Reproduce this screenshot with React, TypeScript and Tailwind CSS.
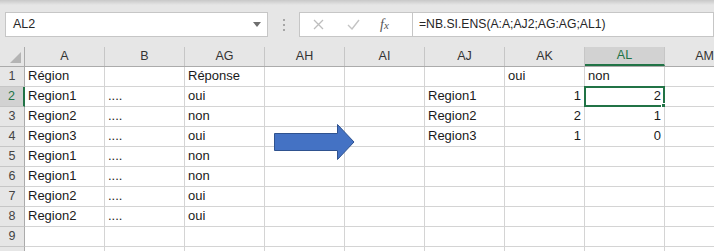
import React from "react";

type Cell = { v: string; right?: boolean };

const columns = ["A", "B", "AG", "AH", "AI", "AJ", "AK", "AL", "AM"];

const r = (v: string): Cell => ({ v, right: true });
const t = (v: string): Cell => ({ v });

// one array per row, one entry per column
const rows: Cell[][] = [
  [t("Région"), t(""), t("Réponse"), t(""), t(""), t(""), t("oui"), t("non"), t("")],
  [t("Region1"), t("...."), t("oui"), t(""), t(""), t("Region1"), r("1"), r("2"), t("")],
  [t("Region2"), t("...."), t("non"), t(""), t(""), t("Region2"), r("2"), r("1"), t("")],
  [t("Region3"), t("...."), t("oui"), t(""), t(""), t("Region3"), r("1"), r("0"), t("")],
  [t("Region1"), t("...."), t("non"), t(""), t(""), t(""), t(""), t(""), t("")],
  [t("Region1"), t("...."), t("non"), t(""), t(""), t(""), t(""), t(""), t("")],
  [t("Region2"), t("...."), t("oui"), t(""), t(""), t(""), t(""), t(""), t("")],
  [t("Region2"), t("...."), t("oui"), t(""), t(""), t(""), t(""), t(""), t("")],
  [t(""), t(""), t(""), t(""), t(""), t(""), t(""), t(""), t("")],
];

const font = "font-['Liberation_Sans',Arial,sans-serif]";

function FormulaBar() {
  return (
    <div className="flex h-[47px] flex-col bg-[#e6e6e6]">
      <div className="h-[5px] bg-gradient-to-b from-[#c8c8c8] to-[#e6e6e6]" />
      <div className="mt-[7px] flex h-[25px] items-stretch pl-[5px]">
        {/* name box */}
        <div className="flex w-[263px] items-center justify-between border border-[#c6c6c6] bg-white pl-[7px] pr-[6px]">
          <span className={`${font} text-[12.5px] text-[#262626]`}>AL2</span>
          <svg width="8" height="5" viewBox="0 0 8 5">
            <path d="M0 0 L8 0 L4 5 Z" fill="#6e6e6e" />
          </svg>
        </div>
        {/* grip */}
        <div className="flex w-[31px] flex-col items-center justify-center gap-[3px]">
          <span className="h-[2px] w-[2px] bg-[#a6a6a6]" />
          <span className="h-[2px] w-[2px] bg-[#a6a6a6]" />
          <span className="h-[2px] w-[2px] bg-[#a6a6a6]" />
        </div>
        {/* cancel / enter / fx */}
        <div className="flex w-[113px] items-center border border-r-0 border-[#c6c6c6] bg-white">
          <svg className="ml-[13px]" width="11" height="11" viewBox="0 0 11 11">
            <path d="M1 1 L10 10 M10 1 L1 10" stroke="#bdbdbd" strokeWidth="1.3" />
          </svg>
          <svg className="ml-[23px]" width="13" height="11" viewBox="0 0 13 11">
            <path d="M1 6 L5 10 L12 1" stroke="#c4c4c4" strokeWidth="1.4" fill="none" />
          </svg>
          <span className="ml-[20px] font-['Liberation_Serif',serif] text-[14px] italic text-[#555]">
            f<span className="text-[11px]">x</span>
          </span>
        </div>
        {/* formula input */}
        <div className="flex flex-1 items-center border border-[#c6c6c6] bg-white pl-[6px]">
          <span className={`${font} text-[12.2px] text-[#262626]`}>=NB.SI.ENS(A:A;AJ2;AG:AG;AL1)</span>
        </div>
      </div>
    </div>
  );
}

function Sheet() {
  return (
    <div className={`relative ${font} text-[13px] text-[#1a1a1a]`}>
      {/* column headers */}
      <div className="flex h-[20px] border-b border-[#ababab] bg-[#e6e6e6]">
        <div className="relative w-[25px] shrink-0 border-r border-[#ababab]">
          <svg className="absolute bottom-[3px] right-[3px]" width="11" height="11" viewBox="0 0 11 11">
            <path d="M11 0 L11 11 L0 11 Z" fill="#b4b4b4" />
          </svg>
        </div>
        {columns.map((c) =>
          c === "AL" ? (
            <div
              key={c}
              className="flex w-[80px] shrink-0 items-center justify-center border-r border-[#c6c6c6] border-b-2 border-b-[#217346] bg-[#d2d2d2] text-[12.5px] text-[#217346]"
            >
              {c}
            </div>
          ) : (
            <div
              key={c}
              className="flex w-[80px] shrink-0 items-center justify-center border-r border-[#c6c6c6] text-[12.5px] text-[#333]"
            >
              {c}
            </div>
          )
        )}
      </div>

      {rows.map((row, i) => (
        <div key={i} className="flex h-[20px]">
          {i === 1 ? (
            <div className="flex w-[25px] shrink-0 items-center justify-center border-r-2 border-b border-r-[#217346] border-b-[#c6c6c6] bg-[#d2d2d2] text-[12.5px] text-[#217346]">
              {i + 1}
            </div>
          ) : (
            <div className="flex w-[25px] shrink-0 items-center justify-center border-r border-b border-r-[#ababab] border-b-[#c6c6c6] bg-[#e6e6e6] text-[12.5px] text-[#444]">
              {i + 1}
            </div>
          )}
          {row.map((cell, j) => (
            <div
              key={j}
              className={`relative flex w-[80px] shrink-0 items-end border-r border-b border-[#d4d4d4] bg-white px-[3px] pb-[1px] leading-[18px] ${
                cell.right ? "justify-end" : "justify-start"
              }`}
            >
              {cell.v}
              {i === 1 && columns[j] === "AL" && (
                <div className="absolute -left-[1px] -top-[1px] h-[21px] w-[81px] border-2 border-[#217346]">
                  <span className="absolute -bottom-[4px] -right-[4px] h-[6px] w-[6px] border border-white bg-[#217346]" />
                </div>
              )}
            </div>
          ))}
        </div>
      ))}

      {/* top of row 10, cut by the window */}
      <div className="flex h-[20px]">
        <div className="w-[25px] shrink-0 border-r border-[#ababab] bg-[#e6e6e6]" />
        {columns.map((c) => (
          <div key={c} className="w-[80px] shrink-0 border-r border-[#d4d4d4] bg-white" />
        ))}
      </div>

      {/* block arrow drawn over the grid */}
      <svg className="absolute left-[274px] top-[77px]" width="81" height="36" viewBox="0 0 81 36">
        <path
          d="M0.5 9.5 L63.5 9.5 L63.5 0.5 L80 18 L63.5 35.5 L63.5 26.5 L0.5 26.5 Z"
          fill="#4472c4"
          stroke="#2f528f"
          strokeWidth="1"
        />
      </svg>
    </div>
  );
}

export default function App() {
  return (
    <div className="h-[251px] w-[714px] overflow-hidden bg-white">
      <FormulaBar />
      <Sheet />
    </div>
  );
}
